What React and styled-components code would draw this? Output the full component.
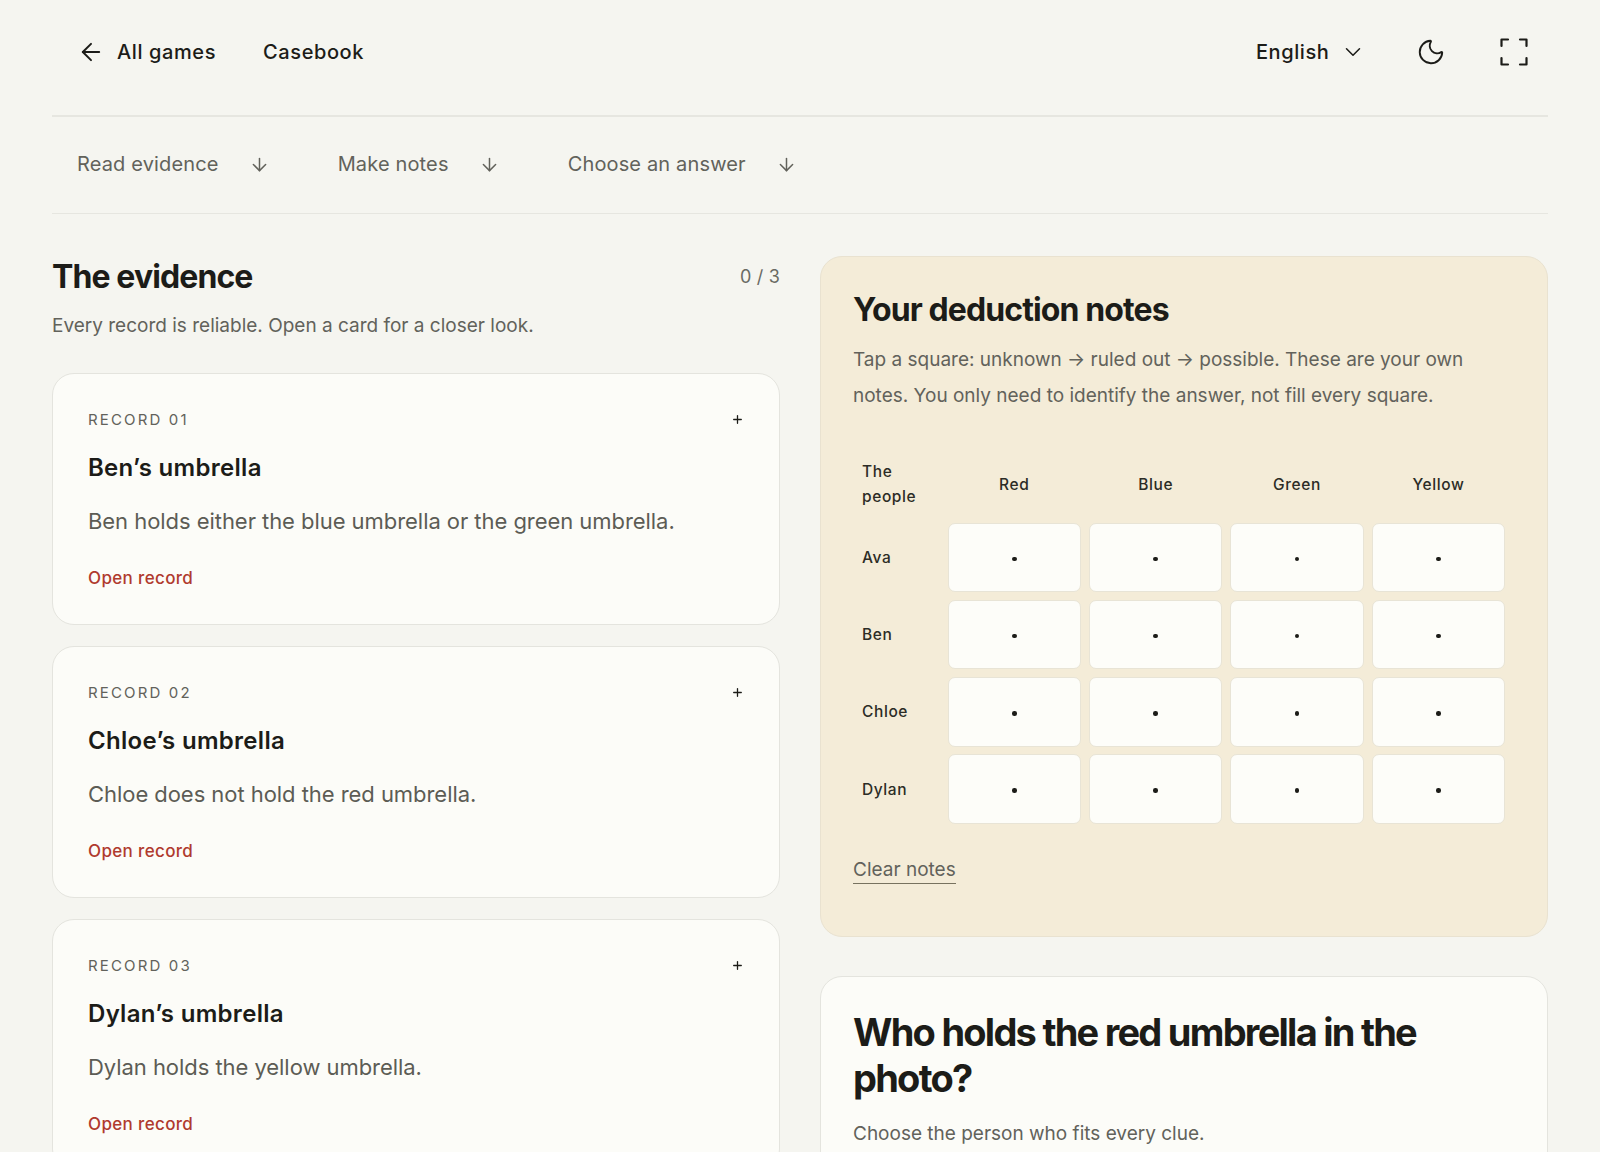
import React from "react";
import styled, { createGlobalStyle } from "styled-components";
import { ArrowLeft, ArrowDown, ChevronDown, Moon, Plus } from "lucide-react";

const Global = createGlobalStyle`
  *, *::before, *::after { box-sizing: border-box; }
  html, body { margin: 0; padding: 0; background: #f5f5f0; height: 1152px; overflow: hidden; }
  body { font-family: Inter, "Liberation Sans", sans-serif; color: #1c1c18; -webkit-font-smoothing: antialiased; }
`;

const Page = styled.div`
  padding: 0 52px;
  height: 1152px;
  overflow: hidden;
`;

const TopBar = styled.header`
  height: 117px;
  border-bottom: 2px solid #e6e6e0;
  display: flex;
  align-items: center;
  justify-content: space-between;
  padding: 0 19px 11px 24.5px;
`;

const NavGroup = styled.nav`
  display: flex;
  align-items: center;
`;

const BackLink = styled.a`
  display: flex;
  align-items: center;
  gap: 12.5px;
  margin-right: 47px;
  font-size: 20px;
  font-weight: 500;
  letter-spacing: 0.6px;
  color: #1c1c18;
`;

const NavLink = styled.a`
  font-size: 20px;
  font-weight: 500;
  letter-spacing: 0.6px;
  color: #1c1c18;
`;

const Tools = styled.div`
  display: flex;
  align-items: center;
`;

const LangSelect = styled.div`
  display: flex;
  align-items: center;
  gap: 10.5px;
  margin-right: 49.5px;
  font-size: 20px;
  font-weight: 500;
  letter-spacing: 0.6px;
`;

const MoonButton = styled.span`
  display: flex;
  margin-right: 53.5px;
  color: #1c1c18;
`;

const FrameIcon = () => (
  <svg width="30" height="30" viewBox="0 0 30 30" fill="none" stroke="#1c1c18" strokeWidth="2.2" strokeLinecap="round" strokeLinejoin="round">
    <path d="M2.5 9V2.5H9M21 2.5h6.5V9M27.5 21v6.5H21M9 27.5H2.5V21" />
  </svg>
);

const StepBar = styled.div`
  height: 97px;
  border-bottom: 1.5px solid #e6e6e0;
  display: flex;
  align-items: center;
  padding: 0 0 2px 25px;
  gap: 67.5px;
`;

const Step = styled.span`
  display: flex;
  align-items: center;
  gap: 30.5px;
  font-size: 20px;
  letter-spacing: 0.15px;
  color: #62625b;
`;

const Columns = styled.main`
  display: grid;
  grid-template-columns: 1fr 1fr;
  gap: 40px;
  padding-top: 42px;
  align-items: start;
`;

const Column = styled.section`
  display: flex;
  flex-direction: column;
`;

const EvidenceHead = styled.div`
  display: flex;
  justify-content: space-between;
  align-items: center;
  height: 42px;
`;

const SectionTitle = styled.h2`
  margin: 0;
  font-size: 32px;
  font-weight: 700;
  letter-spacing: -0.9px;
  line-height: 42px;
  color: #1c1c18;
`;

const Counter = styled.span`
  margin-bottom: 2px;
  font-size: 18px;
  letter-spacing: 0.2px;
  color: #6a6a63;
`;

const Lead = styled.p`
  margin: 14px 0 33px;
  font-size: 19px;
  line-height: 28px;
  color: #62625b;
`;

const CardList = styled.div`
  display: flex;
  flex-direction: column;
  gap: 21px;
`;

const RecordCard = styled.article`
  background: #fcfcf8;
  border: 1.5px solid #e4e4de;
  border-radius: 22px;
  padding: 33px 35px 34px;
`;

const RecordTop = styled.div`
  display: flex;
  justify-content: space-between;
  align-items: center;
  height: 24px;
  color: #1c1c18;
`;

const RecordLabel = styled.span`
  font-size: 15px;
  letter-spacing: 2.15px;
  color: #62625b;
`;

const RecordName = styled.h3`
  margin: 20px 0 0;
  font-size: 24px;
  font-weight: 600;
  letter-spacing: 0.3px;
  line-height: 34px;
  color: #1c1c18;
`;

const RecordText = styled.p`
  margin: 19px 0 0;
  font-size: 22px;
  letter-spacing: -0.05px;
  line-height: 34px;
  color: #5c5c55;
`;

const OpenLink = styled.a`
  display: block;
  margin-top: 28px;
  font-size: 17px;
  line-height: 24px;
  font-weight: 500;
  letter-spacing: 0.35px;
  color: #b03a2e;
`;

const NotesPanel = styled.section`
  background: #f4ecd8;
  border: 1.5px solid #e9e2d0;
  border-radius: 22px;
  padding: 32px 32px 52px;
  margin-bottom: 39px;
`;

const NotesText = styled.p`
  margin: 11px 0 0;
  max-width: 630px;
  font-size: 19px;
  line-height: 35.5px;
  color: #62625b;
`;

const Grid = styled.div`
  display: grid;
  grid-template-columns: 86.5px repeat(4, 133.2px);
  column-gap: 8.2px;
  row-gap: 7.7px;
  margin-top: 47px;
  align-items: center;
`;

const CornerCell = styled.div`
  padding: 0 9px 6px;
  font-size: 15.5px;
  font-weight: 500;
  line-height: 24.5px;
  letter-spacing: 0.6px;
  color: #2c2c26;
`;

const ColHead = styled.div`
  padding: 0 0 6px;
  text-align: center;
  font-size: 15.5px;
  font-weight: 500;
  letter-spacing: 0.6px;
  color: #2c2c26;
`;

const RowHead = styled.div`
  padding: 0 9px;
  font-size: 15.5px;
  font-weight: 500;
  letter-spacing: 0.6px;
  color: #2c2c26;
`;

const Square = styled.button`
  height: 69.5px;
  padding: 3px 0 0;
  background: #fdfdf9;
  border: 1.5px solid #e8e4d6;
  border-radius: 7px;
  display: flex;
  align-items: center;
  justify-content: center;
`;

const Dot = styled.span`
  width: 4.5px;
  height: 4.5px;
  border-radius: 50%;
  background: #1c1c18;
`;

const ClearButton = styled.a`
  display: inline-block;
  margin-top: 33px;
  font-size: 19px;
  line-height: 26px;
  color: #62625b;
  border-bottom: 1.5px solid #77725f;
`;

const QuestionCard = styled.section`
  background: #fcfcf8;
  border: 1.5px solid #e4e4de;
  border-radius: 22px;
  min-height: 400px;
  padding: 32px 32px 34px;
`;

const QuestionTitle = styled.h2`
  margin: 0;
  font-size: 38px;
  font-weight: 700;
  letter-spacing: -1.75px;
  line-height: 46px;
  color: #1c1c18;
`;

const QuestionText = styled.p`
  margin: 19px 0 0;
  font-size: 19px;
  line-height: 28px;
  color: #62625b;
`;

const records = [
  ["RECORD 01", "Ben’s umbrella", "Ben holds either the blue umbrella or the green umbrella."],
  ["RECORD 02", "Chloe’s umbrella", "Chloe does not hold the red umbrella."],
  ["RECORD 03", "Dylan’s umbrella", "Dylan holds the yellow umbrella."],
];
const colours = ["Red", "Blue", "Green", "Yellow"];
const people = ["Ava", "Ben", "Chloe", "Dylan"];
const steps = ["Read evidence", "Make notes", "Choose an answer"];

export default function App() {
  return (
    <Page>
      <Global />
      <TopBar>
        <NavGroup>
          <BackLink><ArrowLeft size={28} strokeWidth={1.7} />All games</BackLink>
          <NavLink>Casebook</NavLink>
        </NavGroup>
        <Tools>
          <LangSelect>English<ChevronDown size={26} strokeWidth={1.4} /></LangSelect>
          <MoonButton><Moon size={30} strokeWidth={1.5} /></MoonButton>
          <FrameIcon />
        </Tools>
      </TopBar>
      <StepBar>
        {steps.map((s) => (
          <Step key={s}>{s}<ArrowDown size={21} strokeWidth={1.7} /></Step>
        ))}
      </StepBar>
      <Columns>
        <Column>
          <EvidenceHead>
            <SectionTitle>The evidence</SectionTitle>
            <Counter>0 / 3</Counter>
          </EvidenceHead>
          <Lead>Every record is reliable. Open a card for a closer look.</Lead>
          <CardList>
            {records.map(([label, name, text]) => (
              <RecordCard key={label}>
                <RecordTop>
                  <RecordLabel>{label}</RecordLabel>
                  <Plus size={13} strokeWidth={2.4} />
                </RecordTop>
                <RecordName>{name}</RecordName>
                <RecordText>{text}</RecordText>
                <OpenLink>Open record</OpenLink>
              </RecordCard>
            ))}
          </CardList>
        </Column>
        <Column>
          <NotesPanel>
            <SectionTitle>Your deduction notes</SectionTitle>
            <NotesText>Tap a square: unknown → ruled out → possible. These are your own notes. You only need to identify the answer, not fill every square.</NotesText>
            <Grid>
              <CornerCell>The people</CornerCell>
              {colours.map((c) => <ColHead key={c}>{c}</ColHead>)}
              {people.map((p) => (
                <React.Fragment key={p}>
                  <RowHead>{p}</RowHead>
                  {colours.map((c) => <Square key={c}><Dot /></Square>)}
                </React.Fragment>
              ))}
            </Grid>
            <ClearButton>Clear notes</ClearButton>
          </NotesPanel>
          <QuestionCard>
            <QuestionTitle>Who holds the red umbrella in the photo?</QuestionTitle>
            <QuestionText>Choose the person who fits every clue.</QuestionText>
          </QuestionCard>
        </Column>
      </Columns>
    </Page>
  );
}
